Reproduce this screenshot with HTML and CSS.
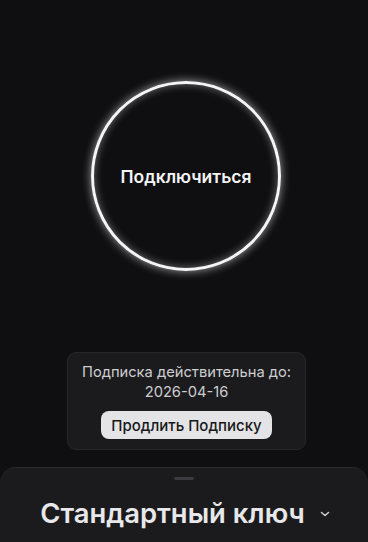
FILE: index.html
```html
<!DOCTYPE html>
<html lang="ru">
<head>
<meta charset="utf-8">
<link rel="stylesheet" href="styles.css">
</head>
<body>
<div class="app">
  <main class="main">
    <div class="connect-wrap">
      <button class="connect">Подключиться</button>
    </div>
    <div class="sub-card">
      <div class="sub-text">Подписка действительна до:</div>
      <div class="sub-text">2026-04-16</div>
      <button class="renew">Продлить Подписку</button>
    </div>
  </main>
  <section class="sheet">
    <div class="handle"></div>
    <div class="sheet-title">
      <span>Стандартный ключ</span>
      <svg class="chev" width="10" height="8" viewBox="0 0 10 8"><path d="M1.5 2.5l3.5 3 3.5-3" fill="none" stroke="#d0d0d4" stroke-width="1.5" stroke-linecap="round" stroke-linejoin="round"/></svg>
    </div>
  </section>
</div>
</body>
</html>
```
FILE: styles.css
```css
* { box-sizing: border-box; }
html, body { margin: 0; padding: 0; }
body {
  background: #0f0f12;
  font-family: Inter, "Noto Sans", sans-serif;
  color: #f2f2f2;
  width: 368px;
  height: 542px;
  overflow: hidden;
}
.app {
  height: 542px;
  display: flex;
  flex-direction: column;
}
.main {
  flex: 1;
  display: flex;
  flex-direction: column;
  align-items: center;
}
.connect-wrap {
  padding-top: 81px;
  padding-left: 4px;
}
.connect {
  width: 190px;
  height: 190px;
  border-radius: 50%;
  border: 3px solid #f4f4f4;
  background: transparent;
  box-shadow: 0 0 10px rgba(255,255,255,0.6), inset 0 0 9px rgba(255,255,255,0.4);
  color: #f4f4f4;
  font-family: Inter, "Noto Sans", sans-serif;
  font-size: 17.5px;
  font-weight: 600;
  padding: 0;
  cursor: pointer;
}
.sub-card {
  margin-top: 81px;
  margin-left: 5px;
  width: 239px;
  height: 98px;
  background: #1b1b1e;
  border: 1px solid #26262a;
  border-radius: 9px;
  display: flex;
  flex-direction: column;
  align-items: center;
  padding-top: 9px;
}
.sub-text {
  font-size: 14.7px;
  line-height: 20px;
  color: #cdcdd0;
}
.renew {
  margin-top: 9px;
  width: 171px;
  height: 28px;
  border: none;
  border-radius: 8px;
  background: #e4e4e6;
  color: #18181b;
  font-family: Inter, "Noto Sans", sans-serif;
  font-size: 15px;
  font-weight: 500;
  padding: 0;
}
.sheet {
  height: 75px;
  background: #1b1b1e;
  border-top: 1px solid #2a2a2e;
  border-radius: 16px 16px 0 0;
  display: flex;
  flex-direction: column;
  align-items: center;
}
.handle {
  margin-top: 9px;
  width: 20px;
  height: 3px;
  border-radius: 2px;
  background: #3a3a3f;
}
.sheet-title {
  margin-top: 16px;
  display: flex;
  align-items: center;
  gap: 15px;
  padding-left: 2px;
}
.sheet-title span {
  font-size: 27.4px;
  font-weight: 600;
  color: #e8e8ea;
  line-height: 34px;
}
.chev { display: block; margin-top: 2px; }
```
